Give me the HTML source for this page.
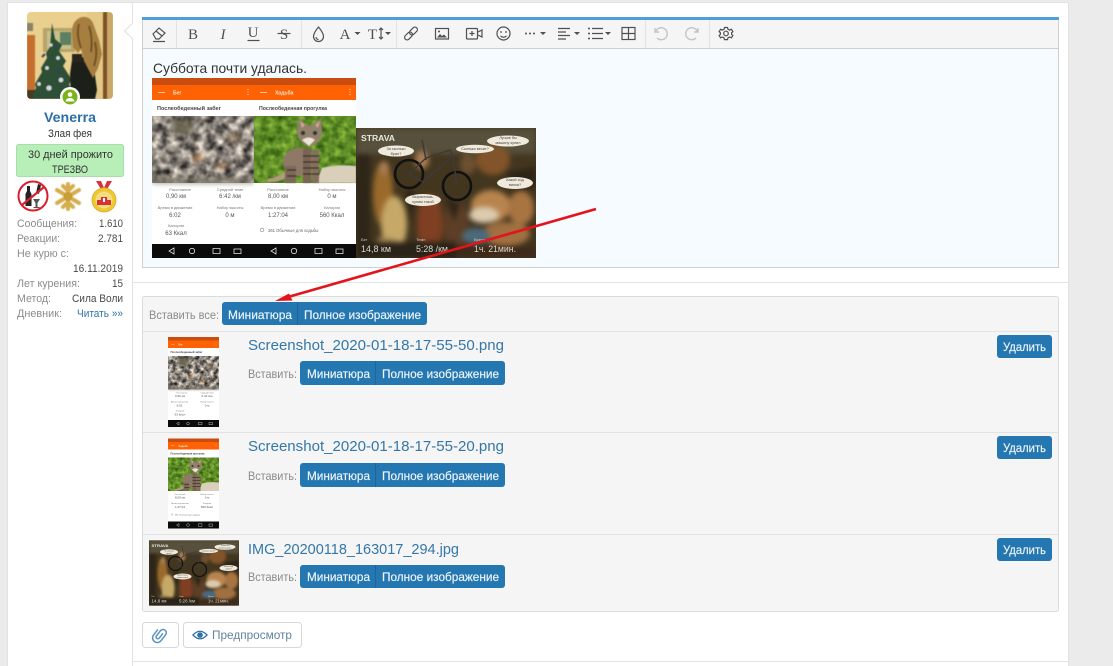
<!DOCTYPE html>
<html lang="ru"><head><meta charset="utf-8"><title>Редактор</title>
<style>
html,body{margin:0;padding:0;background:#ebebeb;width:1113px;height:666px;overflow:hidden}
svg{display:block}
text{font-family:"Liberation Sans","Noto Sans CJK SC",sans-serif}
.l{font-size:11px;fill:#8c8c8c}.v{font-size:11px;fill:#4a4a4a}
.b{font-size:12px;fill:#eef5fa;stroke:#eef5fa;stroke-width:.15px}.g{font-size:12px;fill:#8a8a8a}.f{font-size:15px;fill:#3477a8}
.i{fill:none;stroke:#505050;stroke-width:1.2}.t{fill:#505050}
.s{font-size:4px;fill:#777}.m{font-size:6px;fill:#555}
</style></head><body>
<svg xmlns="http://www.w3.org/2000/svg" width="1113" height="666" viewBox="0 0 1113 666">
<defs>
<filter id="stone" x="0" y="0" width="100%" height="100%" color-interpolation-filters="sRGB"><feTurbulence type="fractalNoise" baseFrequency=".11" numOctaves="4" seed="7"/><feColorMatrix values="1.5 0 0 0 -.2  1.45 0 0 0 -.2  1.35 0 0 0 -.18  0 0 0 0 1"/><feGaussianBlur stdDeviation=".7"/></filter>
<filter id="grass" x="0" y="0" width="100%" height="100%" color-interpolation-filters="sRGB"><feTurbulence type="fractalNoise" baseFrequency=".14" numOctaves="3" seed="3"/><feColorMatrix values=".6 0 0 0 .07  .6 0 0 0 .25  .3 0 0 0 0  0 0 0 0 1"/><feGaussianBlur stdDeviation=".5"/></filter>
<filter id="b1" color-interpolation-filters="sRGB"><feGaussianBlur stdDeviation=".6"/></filter>
<filter id="b2" x="-20%" y="-20%" width="140%" height="140%" color-interpolation-filters="sRGB"><feGaussianBlur stdDeviation="2.600"/></filter>
<filter id="b3" x="0" y="0" width="100%" height="100%" color-interpolation-filters="sRGB"><feGaussianBlur stdDeviation=".35"/></filter>
<symbol id="bar" viewBox="0 0 102 14"><rect width="102" height="14" fill="#0b0b0b"/><path d="M22 4l-5 3 5 3zM61 4.500h7v5h-7z" fill="none" stroke="#ddd" stroke-width=".8"/><circle cx="40" cy="7" r="2.700" fill="none" stroke="#ddd" stroke-width=".8"/><rect x="82" y="5" width="7" height="4.500" fill="none" stroke="#ddd" stroke-width=".8"/></symbol>
<symbol id="p1" viewBox="0 0 102 180">
<rect width="102" height="180" fill="#fff"/><rect width="102" height="7" fill="#c94d0e"/><rect y="7" width="102" height="15" fill="#ff6205"/>
<path d="M6 14.500h7" stroke="#ffc9a0" stroke-width="1"/><path d="M96 11v7" stroke="#ffd6b8" stroke-width="1" stroke-dasharray="1 1.500"/><text x="21" y="16.500" font-size="5" font-weight="bold" fill="#ffe6d2">Бег</text>
<text x="5" y="32" font-size="5.100" font-weight="bold" fill="#444" textLength="64" lengthAdjust="spacingAndGlyphs">Послеобеденный забег</text>
<rect y="38" width="102" height="67" fill="#8d8479"/><rect y="38" width="102" height="67" filter="url(#stone)"/>
<g filter="url(#b2)"><ellipse cx="31" cy="49" rx="11" ry="8" fill="#5d5840" opacity=".8"/><ellipse cx="46" cy="80" rx="6" ry="3" fill="#b37b45" opacity=".9"/><ellipse cx="70" cy="88" rx="6" ry="3" fill="#a87648" opacity=".8"/><ellipse cx="82" cy="60" rx="8" ry="4" fill="#8f6f50" opacity=".6"/><rect y="100" width="102" height="5" fill="#6f6b58" opacity=".8"/></g>
<g class="s" text-anchor="middle"><text x="28" y="113">Расстояние</text><text x="78" y="113">Средний темп</text><text x="23" y="131">Время в движении</text><text x="78" y="131">Набор высоты</text><text x="24" y="149">Калории</text></g>
<g class="m" text-anchor="middle"><text x="24" y="120">0,90 км</text><text x="78" y="120">6:42 /км</text><text x="23" y="139">6:02</text><text x="78" y="139">0 м</text><text x="24" y="157">63 Ккал</text></g>
<use href="#bar" y="166" width="102" height="14"/>
</symbol>
<symbol id="p2" viewBox="0 0 102 180">
<rect width="102" height="180" fill="#fff"/><rect width="102" height="7" fill="#c94d0e"/><rect y="7" width="102" height="15" fill="#ff6205"/>
<path d="M6 14.500h7" stroke="#ffc9a0" stroke-width="1"/><path d="M96 11v7" stroke="#ffd6b8" stroke-width="1" stroke-dasharray="1 1.500"/><text x="21" y="16.500" font-size="5" font-weight="bold" fill="#ffe6d2">Ходьба</text>
<text x="5" y="32" font-size="5.100" font-weight="bold" fill="#444" textLength="68" lengthAdjust="spacingAndGlyphs">Послеобеденная прогулка</text>
<rect y="38" width="102" height="67" fill="#5f8a32"/><rect y="38" width="102" height="67" filter="url(#grass)"/>
<path d="M62 105l6-15q16-4 34-2v17z" fill="#d9cfba" filter="url(#b1)"/>
<g filter="url(#b1)">
<path d="M13 101q9-1 18-7l2 5q-9 6-19 5z" fill="#b29a80"/>
<ellipse cx="45" cy="84" rx="16" ry="14" fill="#8f7966"/>
<rect x="31" y="88" width="11" height="17" fill="#7d6959"/>
<rect x="49" y="70" width="8" height="35" fill="#7a6555"/><rect x="58" y="72" width="7" height="33" fill="#857060"/>
<path d="M49 78h16M49 84h16M49 90h16M49 96h16M33 92h9M33 98h9" stroke="#3f3328" stroke-width="1.300"/>
<path d="M43 53l2-13 9 8h3l10-8 1 13q0 12-12 15-13-3-13-15z" fill="#94806e"/>
<path d="M46 43l2 7 3-3zM66 43l-2 7-3-3z" fill="#cfa88c"/>
<path d="M48 62q7-5 13 0l-6 6z" fill="#ece5da"/>
<circle cx="49" cy="55" r="2" fill="#2f3a22"/><circle cx="61" cy="55" r="2" fill="#2f3a22"/>
</g>
<g class="s" text-anchor="middle"><text x="24" y="113">Расстояние</text><text x="78" y="113">Набор высоты</text><text x="24" y="131">Время в движении</text><text x="78" y="131">Калории</text></g>
<g class="m" text-anchor="middle"><text x="24" y="120">8,00 км</text><text x="78" y="120">0 м</text><text x="24" y="139">1:27:04</text><text x="78" y="139">560 Ккал</text></g>
<text x="14" y="154" font-size="4.200" fill="#666">361 Обычные для ходьбы</text><circle cx="8" cy="152" r="1.800" fill="none" stroke="#888" stroke-width=".6"/>
<use href="#bar" y="166" width="102" height="14"/>
</symbol>
<symbol id="st" viewBox="0 0 180 130">
<rect width="180" height="130" fill="#43361f"/>
<g filter="url(#b2)">
<rect width="180" height="26" fill="#57503c"/>
<rect x="0" y="26" width="14" height="104" fill="#2e2618"/>
<ellipse cx="27" cy="66" rx="10" ry="32" fill="#9a6a2c"/>
<ellipse cx="28" cy="40" rx="5" ry="7" fill="#a87c50"/>
<ellipse cx="38" cy="96" rx="13" ry="28" fill="#c6a868"/>
<ellipse cx="30" cy="118" rx="12" ry="9" fill="#a88c54"/>
<ellipse cx="74" cy="96" rx="13" ry="30" fill="#7f3f22"/>
<ellipse cx="66" cy="32" rx="7" ry="9" fill="#a87c50"/>
<ellipse cx="100" cy="98" rx="12" ry="26" fill="#5d3e26"/>
<ellipse cx="137" cy="32" rx="17" ry="15" fill="#825429"/>
<ellipse cx="112" cy="36" rx="8" ry="10" fill="#6d5030"/>
<ellipse cx="135" cy="78" rx="20" ry="16" fill="#b8844e"/>
<ellipse cx="128" cy="87" rx="15" ry="8" fill="#dccbb0"/>
<ellipse cx="165" cy="80" rx="13" ry="17" fill="#a87442"/>
<ellipse cx="150" cy="106" rx="24" ry="12" fill="#a07040"/>
<ellipse cx="120" cy="108" rx="14" ry="8" fill="#4c6a7c"/>
<path d="M150 45l30-6v20l-20 2zM90 70l14 6-6 18zM50 60l10 6-6 30z" fill="#2e2416"/>
<rect x="0" y="114" width="100" height="16" fill="#2a2318"/>
<rect x="100" y="118" width="80" height="12" fill="#3e2a1a"/>
</g>
<g fill="none"><circle cx="53" cy="46" r="14" stroke="#111" stroke-width="2.600"/><circle cx="101" cy="58" r="14" stroke="#111" stroke-width="2.600"/><path d="M53 46l14 8 30-26-3-6-24 8zM97 28l4 30M66 12l4 20" stroke-width="1.500" stroke="#3e3a3a"/></g>
<g fill="#efeadb"><ellipse cx="40" cy="23" rx="18" ry="5.500"/><ellipse cx="119" cy="21" rx="19" ry="4.200"/><ellipse cx="152" cy="13" rx="21" ry="5.500"/><ellipse cx="159" cy="55" rx="18" ry="6"/><ellipse cx="67" cy="72" rx="18" ry="6"/></g>
<g font-size="3.800" fill="#444" text-anchor="middle"><text x="40" y="22">За сколько</text><text x="40" y="27">брал?</text><text x="119" y="22">Сколько весит?</text><text x="152" y="11">Лучше бы</text><text x="152" y="16">машину купил</text><text x="159" y="53">Какой ход</text><text x="159" y="58">вилки?</text><text x="67" y="70">Вырастишь,</text><text x="67" y="75">купим такой</text></g>
<text x="5" y="13" font-size="8" font-weight="bold" fill="#e8e8e0" textLength="34" lengthAdjust="spacingAndGlyphs">STRAVA</text>
<g fill="#cfcfc2" font-size="4"><text x="5" y="113">Бег</text><text x="60" y="113">Темп</text><text x="118" y="113">Время</text></g>
<g fill="#d8d8cc" font-size="9"><text x="5" y="124" textLength="30" lengthAdjust="spacingAndGlyphs">14,8 км</text><text x="60" y="124" textLength="32" lengthAdjust="spacingAndGlyphs">5:28 /км</text><text x="118" y="124" textLength="42" lengthAdjust="spacingAndGlyphs">1ч. 21мин.</text></g>
</symbol>
<symbol id="avatar" viewBox="0 0 86 87">
<rect width="86" height="87" fill="#e9d08f"/>
<g filter="url(#b1)">
<path d="M60 0h16v87H60z" fill="#e3c886"/>
<rect x="0" y="23" width="8" height="55" fill="#c66e2e"/><rect y="11" width="6" height="8" fill="#8c8268"/><rect y="78" width="8" height="9" fill="#4a3a24"/>
<rect x="16" y="16" width="32" height="24" fill="#b7a468"/><rect x="20" y="19" width="24" height="18" fill="#c8c08a"/><rect x="33" y="20" width="11" height="13" fill="#5f8060"/>
<path d="M25 11l3 16 7 6-3 6 7 10-3 5 9 14-3 4 4 12-3 3H7l-2-3 4-8-1-4 7-12-1-4 6-10-1-5 4-6z" fill="#2c4f35"/>
<g fill="#d6d4dc"><circle cx="24" cy="33" r="1.800"/><circle cx="31" cy="46" r="2"/><circle cx="20" cy="56" r="2"/><circle cx="34" cy="68" r="2.500"/><circle cx="22" cy="76" r="2.800"/><circle cx="12" cy="72" r="2"/></g>
<path d="M15 45l3-3M30 58l3 2M28 34l2 2" stroke="#3e3a6c" stroke-width="2"/>
<rect x="76" width="4" height="87" fill="#7d5226"/><rect x="80" width="6" height="87" fill="#c9a868"/>
<path d="M44 87l-1-25 2-14 14-4 8 12 3 22-2 9z" fill="#1c2018"/>
<path d="M55 5q-10 3-10 15l1 15 5 6 3-4 3 12 9 17 5-10 4-14-3-14-5-14q-3-10-12-9z" fill="#a67e40"/>
<path d="M52 12q-3 10 2 24M62 14q4 12 2 26M68 30q3 12-1 24" stroke="#6f4f22" stroke-width="1.800" fill="none"/>
<rect x="45" y="42" width="10" height="8" fill="#29251c"/>
</g></symbol>
</defs>

<rect width="1113" height="666" fill="#ebebeb"/>
<rect x="7.500" y="2.500" width="1061" height="670" fill="#fff" stroke="#e2e2e2"/>
<path d="M132.500 3v663M133 282.500h935M133 661.500h935" stroke="#e4e4e4" fill="none"/>
<path d="M133 23l-8.500 8 8.500 8" fill="#fff" stroke="#e0e0e0"/><path d="M133 24v14" stroke="#fff" stroke-width="1.500"/>

<!-- sidebar -->
<clipPath id="ac"><rect x="27" y="12" width="86" height="87" rx="4"/></clipPath>
<g clip-path="url(#ac)"><use href="#avatar" x="27" y="12" width="86" height="87"/></g>
<circle cx="70" cy="97" r="10" fill="#fff"/><circle cx="70" cy="97" r="7.500" fill="#7bb31a"/><circle cx="70" cy="94.500" r="2.300" fill="#fff"/><path d="M65.500 101.500q.5-3.500 4.500-3.500t4.500 3.500z" fill="#fff"/>
<text x="44" y="122" font-size="14" font-weight="bold" fill="#2b6fa6" textLength="52" lengthAdjust="spacingAndGlyphs">Venerra</text>
<text x="48" y="137" font-size="11" fill="#333" textLength="44" lengthAdjust="spacingAndGlyphs">Злая фея</text>
<rect x="16.500" y="144.500" width="107" height="32" rx="2" fill="#b8efb8" stroke="#a6e0a6"/>
<text x="28" y="158" font-size="11" fill="#333" textLength="85" lengthAdjust="spacingAndGlyphs">30 дней прожито</text>
<text x="52" y="173" font-size="11" fill="#333" textLength="36" lengthAdjust="spacingAndGlyphs">ТРЕЗВО</text>
<!-- badges -->
<path d="M27 186h3v5l1.500 3v12h-6v-12l1.500-3zM38 184l3 1-2 9-3-1z" fill="#222"/><path d="M33 199h7l-2.500 4v4h2v1h-6v-1h2v-4z" fill="#555"/>
<circle cx="33" cy="196" r="14.500" fill="none" stroke="#d8202c" stroke-width="2"/><path d="M22 205l22-18" stroke="#d8202c" stroke-width="2.200"/>
<g stroke="#d6ad4c" stroke-width="4" stroke-linecap="round" fill="none" filter="url(#b1)"><path d="M68 184v25M57 190l22 13M79 190l-22 13M63 186l5 5 5-5M63 207l5-5 5 5"/></g><circle cx="68" cy="196.500" r="4.500" fill="#c99d38"/>
<path d="M96 181l6 10 3-1-4-9zM112 181l-6 10-3-1 4-9z" fill="#d8333a"/>
<circle cx="104" cy="200" r="12" fill="#eec92e" stroke="#d9b53a" stroke-width="1"/><circle cx="104" cy="200" r="8.500" fill="#f4dc80"/>
<path d="M97 205v-5h4v-3h6v3h4v5z" fill="#d8333a"/><rect x="103" y="198" width="2" height="4" fill="#fff"/>
<g>
<text class="l" x="17" y="227" textLength="60" lengthAdjust="spacingAndGlyphs">Сообщения:</text><text class="v" x="99" y="227" textLength="24" lengthAdjust="spacingAndGlyphs">1.610</text>
<text class="l" x="17" y="242" textLength="43" lengthAdjust="spacingAndGlyphs">Реакции:</text><text class="v" x="98" y="242" textLength="25" lengthAdjust="spacingAndGlyphs">2.781</text>
<text class="l" x="17" y="257" textLength="52" lengthAdjust="spacingAndGlyphs">Не курю с:</text>
<text class="v" x="73" y="272" textLength="50" lengthAdjust="spacingAndGlyphs">16.11.2019</text>
<text class="l" x="17" y="287" textLength="63" lengthAdjust="spacingAndGlyphs">Лет курения:</text><text class="v" x="112" y="287" textLength="11" lengthAdjust="spacingAndGlyphs">15</text>
<text class="l" x="17" y="302" textLength="34" lengthAdjust="spacingAndGlyphs">Метод:</text><text class="v" x="72" y="302" textLength="51" lengthAdjust="spacingAndGlyphs">Сила Воли</text>
<text class="l" x="17" y="317" textLength="45" lengthAdjust="spacingAndGlyphs">Дневник:</text><text x="77" y="317" font-size="11" fill="#2d72a6" textLength="46" lengthAdjust="spacingAndGlyphs">Читать »»</text>
</g>

<!-- editor -->
<rect x="142.500" y="17.500" width="916" height="250" fill="#f6fbff" stroke="#cfcfcf"/>
<rect x="143" y="20" width="915" height="28" fill="#f5f5f5"/><rect x="142" y="48" width="917" height="1" fill="#cfcfcf"/>
<rect x="142" y="17" width="917" height="3" fill="#4f9fd8"/>
<path d="M176.500 20v28M301.500 20v28M396.500 20v28M645.500 20v28M709.500 20v28" stroke="#e2e2e2"/>
<!-- toolbar icons -->
<path class="i" d="M153 34l6-6 6 5-6 6h-3zM156 31l6 5M153 41.500h12"/>
<text class="t" x="193" y="39" font-size="15" text-anchor="middle" style="font-family:'Liberation Serif',serif">B</text>
<text class="t" x="223" y="39" font-size="15" font-style="italic" text-anchor="middle" style="font-family:'Liberation Serif',serif">I</text>
<text class="t" x="253" y="37" font-size="15" text-anchor="middle" style="font-family:'Liberation Serif',serif">U</text><path d="M247.500 40.500h12" stroke="#505050" stroke-width="1.200"/>
<text class="t" x="284" y="39" font-size="15" text-anchor="middle" style="font-family:'Liberation Serif',serif">S</text><path d="M277.500 33.500h13" stroke="#505050" stroke-width="1.200"/>
<path class="i" d="M318.500 27q5 6 5 9.500a5 5 0 0 1-10 0q0-3.500 5-9.500zM316 37a2.500 2.500 0 0 0 2.500 2.500"/>
<text class="t" x="345" y="39" font-size="15" text-anchor="middle" style="font-family:'Liberation Serif',serif">A</text><path class="t" d="M354.500 32h6l-3 3z"/>
<text class="t" x="372.500" y="39" font-size="15" text-anchor="middle" style="font-family:'Liberation Serif',serif">T</text><path class="i" d="M381 28v11M379 30l2-2 2 2M379 37l2 2 2-2"/><path class="t" d="M385 32h6l-3 3z"/>
<g class="i" transform="rotate(-45 411 33.500)"><rect x="403" y="31" width="9" height="5" rx="2.500"/><rect x="410" y="31" width="9" height="5" rx="2.500"/></g>
<rect class="i" x="435.500" y="28.500" width="13" height="10.500"/><path class="t" d="M437 37.500l3-3.500 2 2 2-1.500 3 3z"/><circle class="t" cx="439" cy="31.500" r="1"/>
<rect class="i" x="466.500" y="28.500" width="11" height="10.500" rx="1"/><path class="i" d="M472 31v5M469.500 33.500h5M478 32l4-2v7l-4-2"/>
<circle class="i" cx="503.500" cy="33.500" r="6.500"/><circle class="t" cx="501" cy="32" r=".9"/><circle class="t" cx="506" cy="32" r=".9"/><path class="i" d="M500.500 36q3 2.500 6 0"/>
<g class="t"><circle cx="526" cy="33.500" r="1"/><circle cx="530" cy="33.500" r="1"/><circle cx="534" cy="33.500" r="1"/><path d="M540 32h6l-3 3z"/></g>
<path class="i" d="M558 28.500h12M558 32h8M558 35.500h12M558 39h8"/><path class="t" d="M574 32h6l-3 3z"/>
<path class="i" d="M592 28.500h11M592 33.500h11M592 38.500h11"/><g class="t"><circle cx="589" cy="28.500" r="1"/><circle cx="589" cy="33.500" r="1"/><circle cx="589" cy="38.500" r="1"/><path d="M605 32h6l-3 3z"/></g>
<rect class="i" x="622" y="27.500" width="13" height="12" stroke-width="1.400"/><path class="i" d="M628.500 27.500v12M622 33.500h13"/>
<path d="M655 28v4h4M655.500 32a6 6 0 1 1 1.500 6" fill="none" stroke="#c4c4c4" stroke-width="1.400"/>
<path d="M698 28v4h-4M697.500 32a6 6 0 1 0-1.500 6" fill="none" stroke="#c4c4c4" stroke-width="1.400"/>
<circle class="i" cx="726" cy="33.500" r="2.300"/><path class="i" d="M724.500 27.500h3l.5 1.800 1.700.8 1.700-.8 1.500 2.300-1.300 1.200v1.500l1.300 1.200-1.500 2.300-1.700-.8-1.700.8-.5 1.800h-3l-.5-1.800-1.700-.8-1.700.8-1.500-2.300 1.300-1.200v-1.500l-1.300-1.200 1.500-2.300 1.700.8 1.700-.8z"/>

<text x="153" y="73" font-size="14" fill="#333" textLength="154" lengthAdjust="spacingAndGlyphs">Суббота почти удалась.</text>
<use href="#p1" x="152" y="78" width="102" height="180" filter="url(#b3)"/>
<use href="#p2" x="254" y="78" width="102" height="180" filter="url(#b3)"/>
<use href="#st" x="356" y="128" width="180" height="130" filter="url(#b3)"/>

<!-- attachments -->
<rect x="142.500" y="296.500" width="916" height="315" rx="2" fill="#f5f5f5" stroke="#dcdcdc"/>
<path d="M143 331.500h915M143 432.500h915M143 534.500h915" stroke="#e2e2e2"/>
<text class="g" x="149" y="319" textLength="70" lengthAdjust="spacingAndGlyphs">Вставить все:</text>
<rect x="222" y="302" width="205" height="23" rx="3" fill="#2577b1"/><path d="M297.500 302v23" stroke="#1f6598"/>
<text class="b" x="228" y="319" textLength="64" lengthAdjust="spacingAndGlyphs">Миниатюра</text><text class="b" x="304" y="319" textLength="117" lengthAdjust="spacingAndGlyphs">Полное изображение</text>

<use href="#p1" x="168" y="337" width="51" height="90"/>
<text class="f" x="248" y="350" textLength="256" lengthAdjust="spacingAndGlyphs">Screenshot_2020-01-18-17-55-50.png</text>
<text class="g" x="248" y="378" textLength="49" lengthAdjust="spacingAndGlyphs">Вставить:</text>
<rect x="300" y="361" width="205" height="24" rx="3" fill="#2577b1"/><path d="M375.500 361v24" stroke="#1f6598"/>
<text class="b" x="307" y="378" textLength="63" lengthAdjust="spacingAndGlyphs">Миниатюра</text><text class="b" x="382" y="378" textLength="117" lengthAdjust="spacingAndGlyphs">Полное изображение</text>
<rect x="997" y="335" width="55" height="23" rx="3" fill="#2577b1"/><text class="b" x="1003" y="351" textLength="43" lengthAdjust="spacingAndGlyphs">Удалить</text>

<use href="#p2" x="168" y="438" width="51" height="91"/>
<text class="f" x="248" y="451" textLength="256" lengthAdjust="spacingAndGlyphs">Screenshot_2020-01-18-17-55-20.png</text>
<text class="g" x="248" y="480" textLength="49" lengthAdjust="spacingAndGlyphs">Вставить:</text>
<rect x="300" y="463" width="205" height="24" rx="3" fill="#2577b1"/><path d="M375.500 463v24" stroke="#1f6598"/>
<text class="b" x="307" y="480" textLength="63" lengthAdjust="spacingAndGlyphs">Миниатюра</text><text class="b" x="382" y="480" textLength="117" lengthAdjust="spacingAndGlyphs">Полное изображение</text>
<rect x="997" y="436" width="55" height="23" rx="3" fill="#2577b1"/><text class="b" x="1003" y="452" textLength="43" lengthAdjust="spacingAndGlyphs">Удалить</text>

<use href="#st" x="149" y="540" width="90" height="66"/>
<text class="f" x="248" y="554" textLength="211" lengthAdjust="spacingAndGlyphs">IMG_20200118_163017_294.jpg</text>
<text class="g" x="248" y="581" textLength="49" lengthAdjust="spacingAndGlyphs">Вставить:</text>
<rect x="300" y="565" width="205" height="23" rx="3" fill="#2577b1"/><path d="M375.500 565v23" stroke="#1f6598"/>
<text class="b" x="307" y="581" textLength="63" lengthAdjust="spacingAndGlyphs">Миниатюра</text><text class="b" x="382" y="581" textLength="117" lengthAdjust="spacingAndGlyphs">Полное изображение</text>
<rect x="997" y="538" width="55" height="23" rx="3" fill="#2577b1"/><text class="b" x="1003" y="554" textLength="43" lengthAdjust="spacingAndGlyphs">Удалить</text>

<!-- bottom buttons -->
<rect x="142.500" y="622.500" width="36" height="25" rx="3" fill="#fff" stroke="#d8d8d8"/>
<rect x="183.500" y="622.500" width="118" height="25" rx="3" fill="#fff" stroke="#d8d8d8"/>
<g transform="rotate(38 160 635.500)"><path d="M161 632v6a1.800 1.800 0 0 1-3.600 0v-6.500a3.300 3.300 0 0 1 6.600 0v7.500a4.700 4.700 0 0 1-9.400 0v-7" fill="none" stroke="#5a92c0" stroke-width="1.500"/></g>
<path d="M193 635q7-7.500 14 0-7 7.500-14 0z" fill="none" stroke="#2d72a6" stroke-width="1.300"/><circle cx="200" cy="635" r="2.800" fill="#2d72a6"/>
<text x="212" y="639" font-size="12" fill="#62839c" textLength="80" lengthAdjust="spacingAndGlyphs">Предпросмотр</text>

<!-- red arrow -->
<path d="M596 209L288 297" stroke="#e3141c" stroke-width="2.600" fill="none"/>
<path d="M275 301l14-7.500 3.500 7z" fill="#e3141c"/>
</svg>
</body></html>
